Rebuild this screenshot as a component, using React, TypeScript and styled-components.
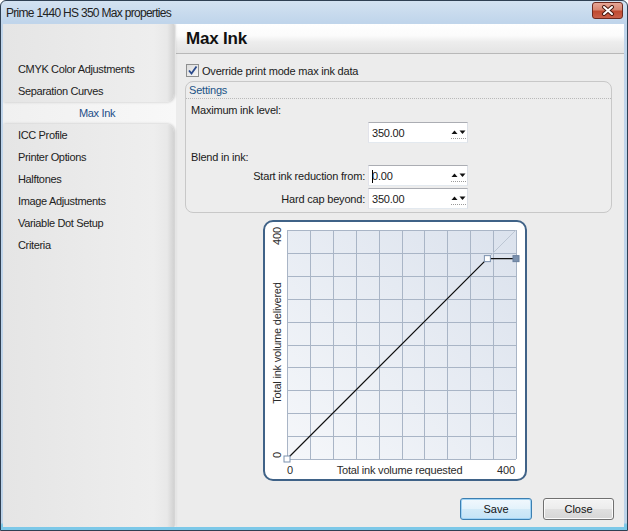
import styled, { createGlobalStyle } from "styled-components";

const GlobalStyle = createGlobalStyle`
  html, body { margin: 0; padding: 0; background: #fff; }
  body { font-family: "Liberation Sans", Arial, sans-serif; }
  * { box-sizing: border-box; }
`;

const menuTop = ["CMYK Color Adjustments", "Separation Curves"];
const menuBottom = [
  "ICC Profile",
  "Printer Options",
  "Halftones",
  "Image Adjustments",
  "Variable Dot Setup",
  "Criteria",
];

// plot geometry inside the chart svg
const X0 = 22;
const Y0 = 8;
const S = 229;
const MAX = 400;
const CAP = 350;

const InkChart = () => {
  const lines = Array.from({ length: 11 }, (_, i) => Math.round(i * (S / 10)) + 0.5);
  const capX = X0 + (S * CAP) / MAX;
  const capY = Y0 + S - (S * CAP) / MAX;
  return (
    <svg width="260" height="257" viewBox="0 0 260 257">
      <defs>
        <linearGradient id="plotBg" x1="0" y1="1" x2="1" y2="0">
          <stop offset="0" stopColor="#f5f7fa" />
          <stop offset="1" stopColor="#dbe2ed" />
        </linearGradient>
      </defs>
      <rect x={X0} y={Y0} width={S} height={S} fill="url(#plotBg)" />
      <g stroke="#a9b5c6" strokeWidth="1" shapeRendering="crispEdges">
        {lines.map((d) => (
          <line key={"v" + d} x1={X0 + d - 0.5} y1={Y0} x2={X0 + d - 0.5} y2={Y0 + S} />
        ))}
        {lines.map((d) => (
          <line key={"h" + d} x1={X0} y1={Y0 + d - 0.5} x2={X0 + S} y2={Y0 + d - 0.5} />
        ))}
      </g>
      <line x1={X0} y1={Y0 + S} x2={X0 + S} y2={Y0} stroke="#bcc6d3" strokeWidth="1" />
      <polyline
        points={`${X0},${Y0 + S} ${capX},${capY} ${X0 + S},${capY}`}
        fill="none"
        stroke="#111"
        strokeWidth="1.2"
      />
      <rect x={X0 - 3} y={Y0 + S - 3} width="6" height="6" fill="#fff" stroke="#7b91ae" />
      <rect x={capX - 3} y={capY - 3} width="6" height="6" fill="#fff" stroke="#7b91ae" />
      <rect x={X0 + S - 3} y={capY - 3} width="6" height="6" fill="#7b91ae" stroke="#6a809e" />
      <g fontFamily="Liberation Sans, Arial, sans-serif" fontSize="11" fill="#2b2b2b">
        <text transform="translate(16,14) rotate(-90)" textAnchor="middle">400</text>
        <text transform="translate(16,233) rotate(-90)" textAnchor="middle">0</text>
        <text transform="translate(16,121) rotate(-90)" textAnchor="middle">
          Total ink volume delivered
        </text>
        <text x="22" y="252">0</text>
        <text x="134.5" y="252" textAnchor="middle">Total ink volume requested</text>
        <text x="241" y="252" textAnchor="middle">400</text>
      </g>
    </svg>
  );
};

const Spinner = () => (
  <svg width="17" height="16" viewBox="0 0 17 16">
    <path d="M1.5 9 L4.5 5.5 L7.5 9 Z" fill="#111" />
    <path d="M9.5 5.5 L15.5 5.5 L12.5 9 Z" fill="#111" />
    <line x1="1" y1="13.5" x2="17" y2="13.5" stroke="#9a9a9a" strokeDasharray="1 1" />
  </svg>
);

const App = () => {
  return (
    <>
      <GlobalStyle />
      <Window>
        <TitleBar>
          <Title>Prime 1440 HS 350 Max properties</Title>
          <CloseButton>
            <svg width="14" height="11" viewBox="0 0 14 11">
              <path d="M3 2 L11 9 M11 2 L3 9" stroke="#4a1b12" strokeWidth="4" strokeLinecap="round" />
              <path d="M3 2 L11 9 M11 2 L3 9" stroke="#fff" strokeWidth="2" strokeLinecap="round" />
            </svg>
          </CloseButton>
        </TitleBar>
        <Client>
          <Sidebar>
            <Panel $pos="top">
              {menuTop.map((m) => (
                <MenuItem key={m}>{m}</MenuItem>
              ))}
            </Panel>
            <SelectedItem>Max Ink</SelectedItem>
            <Panel $pos="bottom">
              {menuBottom.map((m) => (
                <MenuItem key={m}>{m}</MenuItem>
              ))}
            </Panel>
          </Sidebar>
          <Main>
            <Header>Max Ink</Header>
            <Content>
              <CheckRow>
                <CheckBox>
                  <svg width="11" height="11" viewBox="0 0 11 11">
                    <path d="M2 5.5 L4.5 8.5 L9.5 1.5" fill="none" stroke="#2a4a8c" strokeWidth="1.8" />
                  </svg>
                </CheckBox>
                <Text>Override print mode max ink data</Text>
              </CheckRow>
              <Group>
                <GroupTitle>Settings</GroupTitle>
                <FieldLabel $top={4}>Maximum ink level:</FieldLabel>
                <FieldRow $top={5}>
                  <SpinLabel />
                  <SpinBox>
                    <SpinValue>350.00</SpinValue>
                    <Spinner />
                  </SpinBox>
                </FieldRow>
                <FieldLabel $top={7}>Blend in ink:</FieldLabel>
                <FieldRow $top={1}>
                  <SpinLabel>Start ink reduction from:</SpinLabel>
                  <SpinBox>
                    <SpinValue>
                      <Caret />0.00
                    </SpinValue>
                    <Spinner />
                  </SpinBox>
                </FieldRow>
                <FieldRow $top={2}>
                  <SpinLabel>Hard cap beyond:</SpinLabel>
                  <SpinBox>
                    <SpinValue>350.00</SpinValue>
                    <Spinner />
                  </SpinBox>
                </FieldRow>
              </Group>
              <ChartFrame>
                <InkChart />
              </ChartFrame>
              <Buttons>
                <Button $primary>Save</Button>
                <Button>Close</Button>
              </Buttons>
            </Content>
          </Main>
        </Client>
      </Window>
    </>
  );
};

export default App;

const Window = styled.div`
  width: 628px;
  height: 531px;
  display: flex;
  flex-direction: column;
  border: 1px solid #2f4053;
  border-radius: 6px 6px 0 0;
  background: linear-gradient(
    to bottom,
    #d3e2f1 0%,
    #c0d5eb 4%,
    #bdd3e9 98.6%,
    #7cc8e8 99%,
    #7cc8e8 100%
  );
  padding: 0 3px 3px 2px;
`;

const TitleBar = styled.div`
  height: 23px;
  display: flex;
  align-items: center;
  justify-content: space-between;
  padding-left: 3px;
`;

const Title = styled.div`
  font-size: 12px;
  letter-spacing: -0.7px;
  color: #222;
`;

const CloseButton = styled.div`
  width: 31px;
  height: 17px;
  margin-right: 1px;
  align-self: flex-start;
  margin-top: 1px;
  border: 1px solid #6e2a1f;
  border-radius: 3px;
  background: linear-gradient(#e7a696 0%, #d88772 45%, #c04a30 55%, #c9604a 100%);
  display: flex;
  align-items: center;
  justify-content: center;
`;

const Client = styled.div`
  flex: 1;
  display: flex;
  background: #ececec;
  overflow: hidden;
`;

const Sidebar = styled.div`
  width: 173px;
  display: flex;
  flex-direction: column;
  background: linear-gradient(to right, #f0f0f0, #f8f8f8);
  font-size: 11px;
  letter-spacing: -0.35px;
`;

const Panel = styled.div<{ $pos: "top" | "bottom" }>`
  position: relative;
  z-index: 1;
  margin-right: 2px;
  background: linear-gradient(to right, #e5e5e5 0%, #eeeeee 88%, #e8e8e8 96%, #d2d2d2 100%);
  box-shadow: 1px 0 3px rgba(0, 0, 0, 0.22);
  border-radius: ${(p) => (p.$pos === "top" ? "0 0 8px 0" : "0 8px 0 0")};
  padding-top: ${(p) => (p.$pos === "top" ? "34px" : "0")};
  height: ${(p) => (p.$pos === "top" ? "78px" : "auto")};
  flex: ${(p) => (p.$pos === "top" ? "none" : "1")};
`;

const MenuItem = styled.div`
  height: 22px;
  line-height: 22px;
  padding-left: 15px;
  color: #222;
`;

const SelectedItem = styled.div`
  height: 22px;
  line-height: 22px;
  padding-left: 76px;
  color: #1d4e89;
`;

const Main = styled.div`
  flex: 1;
  display: flex;
  flex-direction: column;
  background: #ececec;
  font-size: 11px;
  letter-spacing: -0.2px;
  color: #1a1a1a;
`;

const Header = styled.div`
  height: 30px;
  line-height: 29px;
  padding-left: 10px;
  border-bottom: 1px solid #b8b8b8;
  background: linear-gradient(#ffffff 0%, #fbfbfb 40%, #ededed 62%, #e4e4e4 100%);
  font-size: 17px;
  font-weight: bold;
  letter-spacing: -0.2px;
  color: #111;
`;

const Content = styled.div`
  display: flex;
  flex-direction: column;
  padding: 10px 12px 0 9px;
`;

const CheckRow = styled.div`
  display: flex;
  align-items: center;
  height: 13px;
  padding-left: 1px;
  gap: 3px;
`;

const CheckBox = styled.div`
  width: 13px;
  height: 13px;
  border: 1px solid #8e8f8f;
  background: linear-gradient(135deg, #dcdcdc, #f6f6f6);
  display: flex;
  align-items: center;
  justify-content: center;
`;

const Text = styled.span`
  white-space: nowrap;
`;

const Group = styled.div`
  margin-top: 4px;
  height: 132px;
  border: 1px solid #c8c8c8;
  border-radius: 8px;
  background: #ededed;
`;

const GroupTitle = styled.div`
  height: 17px;
  line-height: 16px;
  padding-left: 3px;
  border-bottom: 1px dotted #b9b9b9;
  color: #1b5487;
`;

const FieldLabel = styled.div<{ $top: number }>`
  margin-top: ${(p) => p.$top}px;
  height: 14px;
  line-height: 14px;
  padding-left: 5px;
`;

const FieldRow = styled.div<{ $top: number }>`
  margin-top: ${(p) => p.$top}px;
  display: flex;
  align-items: center;
  height: 21px;
`;

const SpinLabel = styled.div`
  width: 182px;
  text-align: right;
  padding-right: 3px;
  white-space: nowrap;
`;

const SpinBox = styled.div`
  width: 100px;
  height: 21px;
  display: flex;
  align-items: center;
  padding-left: 3px;
  border: 1px solid;
  border-color: #abadb3 #dbdfe6 #e3e9ef #e2e3ea;
  background: #fff;
`;

const SpinValue = styled.span`
  flex: 1;
  display: flex;
  align-items: center;
  padding-top: 1px;
`;

const Caret = styled.span`
  display: inline-block;
  width: 0;
  height: 13px;
  border-left: 1px solid #000;
  margin-right: -1px;
`;

const ChartFrame = styled.div`
  margin-top: 7px;
  margin-left: 78px;
  width: 264px;
  height: 261px;
  border: 2px solid #3f6287;
  border-radius: 10px;
  background: #fff;
  overflow: hidden;
  svg {
    display: block;
  }
`;

const Buttons = styled.div`
  margin-top: 17px;
  margin-right: -2px;
  display: flex;
  justify-content: flex-end;
  gap: 11px;
`;

const Button = styled.button<{ $primary?: boolean }>`
  width: ${(p) => (p.$primary ? "72px" : "71px")};
  height: 22px;
  padding: 0;
  font-family: "Liberation Sans", Arial, sans-serif;
  font-size: 11px;
  color: #111;
  border-radius: 3px;
  border: 1px solid ${(p) => (p.$primary ? "#3c7fb1" : "#707070")};
  background: ${(p) =>
    p.$primary
      ? "linear-gradient(#f1f8fd 0%, #e3f2fb 50%, #d2eaf8 51%, #c4e3f6 100%)"
      : "linear-gradient(#f4f4f4 0%, #ececec 50%, #e0e0e0 51%, #d6d6d6 100%)"};
  box-shadow: ${(p) => (p.$primary ? "inset 0 0 0 1px #9fd3f5" : "inset 0 0 0 1px #fbfbfb")};
`;
